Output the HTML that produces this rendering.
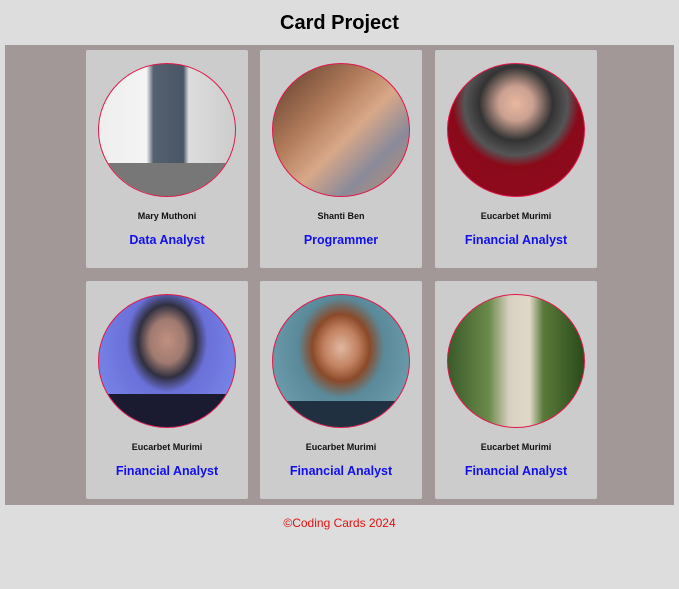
<!DOCTYPE html>
<html><head><style>
body{margin:0;background:#dddddd;font-family:"Liberation Sans",sans-serif;width:679px;height:589px;overflow:hidden}
h1{margin:0;height:45px;line-height:46px;text-align:center;font-size:20px;font-weight:bold;color:#000}
.main{position:absolute;left:5px;top:45px;width:669px;height:460px;background:#a19897}
.card{position:absolute;width:162px;height:218px;background:#cdcccc;border-radius:2px}
.pic{position:absolute;left:12px;top:13px;width:136px;height:132px;border:1px solid #e0194a;border-radius:50%;overflow:hidden}
.name{position:absolute;top:161px;width:100%;text-align:center;font-size:9px;font-weight:bold;color:#111}
.role{position:absolute;top:183px;width:100%;text-align:center;font-size:12.5px;font-weight:bold;color:#1010f0}
.foot{position:absolute;top:516px;width:100%;text-align:center;font-size:12px;color:#e01010}
</style></head><body>
<h1>Card Project</h1>
<div class="main">
<div class="card" style="left:81px;top:5px"><div class="pic" style="background:linear-gradient(90deg,#eee 0,#f4f4f4 35%,#556070 40%,#4a5565 62%,#ddd 66%,#ccc 100%)"><div style="position:absolute;bottom:0;width:100%;height:25%;background:#777"></div></div><div class="name">Mary Muthoni</div><div class="role">Data Analyst</div></div>
<div class="card" style="left:255px;top:5px"><div class="pic" style="background:linear-gradient(135deg,#5a3a2a 0,#b07a5a 35%,#d8a888 55%,#8a8a9a 75%,#c09070 100%)"></div><div class="name">Shanti Ben</div><div class="role">Programmer</div></div>
<div class="card" style="left:430px;top:5px"><div class="pic" style="background:radial-gradient(circle at 50% 30%,#e8b8a0 0,#caa090 15%,#333 32%,#555 45%,#8a0a1a 55%,#900a20 100%)"></div><div class="name">Eucarbet Murimi</div><div class="role">Financial Analyst</div></div>
<div class="card" style="left:81px;top:236px"><div class="pic" style="background:radial-gradient(ellipse at 50% 35%,#c09080 0,#a07a70 18%,#303040 30%,#6a70d8 42%,#8090f0 100%)"><div style="position:absolute;bottom:0;width:100%;height:25%;background:#1a1a30"></div></div><div class="name">Eucarbet Murimi</div><div class="role">Financial Analyst</div></div>
<div class="card" style="left:255px;top:236px"><div class="pic" style="background:radial-gradient(ellipse at 50% 40%,#e0b8a0 0,#c08060 18%,#8a4a2a 30%,#5a8a9a 45%,#7aa8b8 100%)"><div style="position:absolute;bottom:0;width:100%;height:20%;background:#203040"></div></div><div class="name">Eucarbet Murimi</div><div class="role">Financial Analyst</div></div>
<div class="card" style="left:430px;top:236px"><div class="pic" style="background:linear-gradient(90deg,#3a5a2a 0,#6a8a4a 30%,#d8d0c0 45%,#e0d8c8 60%,#5a7a3a 70%,#2a4a1a 100%)"></div><div class="name">Eucarbet Murimi</div><div class="role">Financial Analyst</div></div>
</div>
<div class="foot">©Coding Cards 2024</div>
</body></html>
